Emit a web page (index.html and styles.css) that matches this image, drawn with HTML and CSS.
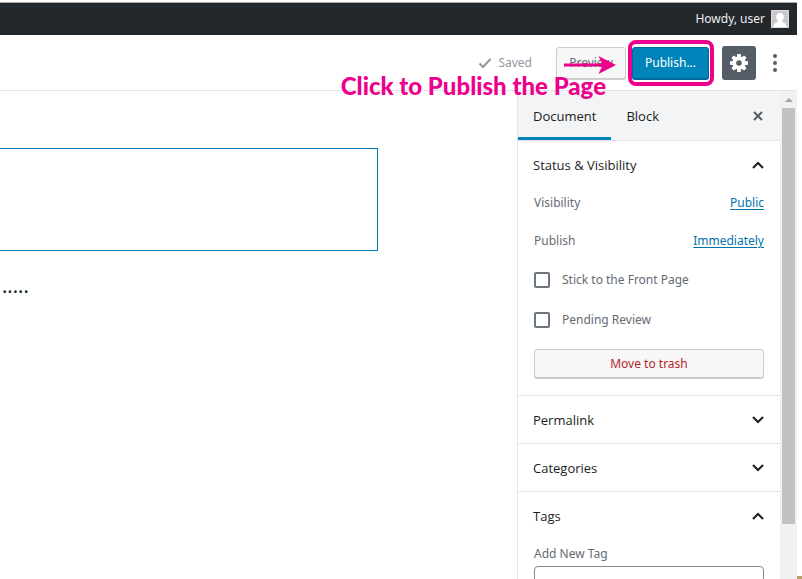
FILE: index.html
```html
<!DOCTYPE html>
<html lang="en">
<head>
<meta charset="utf-8">
<title>Edit Page</title>
<link rel="stylesheet" href="styles.css">
</head>
<body>
<div class="window">
  <div class="admin-bar">
    <span>Howdy, user</span>
    <svg class="avatar" viewBox="0 0 18 18" aria-hidden="true"><path fill="#c9c9c9" d="M0 0h18v18H0z"/><path fill="#fff" d="M9 3c2.300 0 3.800 1.600 3.800 4 0 1.900-.8 3.400-2 4.100.3 1.600 4.200 1.400 4.700 5.400V17h-13v-.5c.5-4 4.400-3.800 4.700-5.400-1.200-.7-2-2.200-2-4.100C5.200 4.600 6.700 3 9 3z"/><path fill="none" stroke="#ddd" d="M.5.500h17v17H.5z"/></svg>
  </div>
  <header class="toolbar">
    <span class="saved">
      <svg width="14" height="12" viewBox="0 0 14 12" aria-hidden="true"><path d="M1.500 6.500l3.500 3.500 7.500-8" fill="none" stroke="#8f98a1" stroke-width="2"/></svg>
      Saved
    </span>
    <div class="publish-group">
      <button class="button preview" type="button">Preview</button>
      <svg class="arrow" width="52" height="20" viewBox="0 0 52 20" aria-hidden="true"><path fill="#ec008c" d="M0 8.500h38L34.500 1 52 10 34.500 19l3.500-7.500H0z"/></svg>
      <button class="button publish" type="button">Publish...</button>
      <strong class="callout">Click to Publish the Page</strong>
    </div>
    <button class="settings" type="button" aria-label="Settings">
      <svg width="18" height="18" viewBox="0 0 18 18" aria-hidden="true"><g fill="#fff"><circle cx="9" cy="9" r="6.500"/><path id="teeth" d="M7.300 0h3.400l.6 4H6.700zM7.300 18h3.400l.6-4H6.700z"/><use href="#teeth" transform="rotate(45 9 9)"/><use href="#teeth" transform="rotate(90 9 9)"/><use href="#teeth" transform="rotate(135 9 9)"/></g><circle cx="9" cy="9" r="2.800" fill="#555d66"/></svg>
    </button>
    <button class="more" type="button" aria-label="More tools">
      <svg width="6" height="20" viewBox="0 0 6 20" fill="#555d66" aria-hidden="true"><circle cx="3" cy="3" r="2"/><circle cx="3" cy="10" r="2"/><circle cx="3" cy="17" r="2"/></svg>
    </button>
  </header>
  <div class="workspace">
    <main class="editor">
      <div class="block"></div>
      <p class="dots">.....</p>
    </main>
    <aside class="sidebar">
      <nav class="tabs">
        <button class="tab active" type="button">Document</button>
        <button class="tab" type="button">Block</button>
        <button class="close" type="button" aria-label="Close settings">
          <svg width="10" height="10" viewBox="0 0 10 10" aria-hidden="true"><path d="M1 1l8 8M9 1L1 9" stroke="#555d66" stroke-width="2"/></svg>
        </button>
      </nav>
      <section class="panel">
        <button class="heading" type="button">Status &amp; Visibility
          <svg width="12" height="8" viewBox="0 0 12 8" aria-hidden="true"><path d="M1 7l5-5 5 5"/></svg>
        </button>
        <div class="body">
          <div class="row"><span>Visibility</span><a href="#">Public</a></div>
          <div class="row"><span>Publish</span><a href="#">Immediately</a></div>
          <label class="check"><input type="checkbox">Stick to the Front Page</label>
          <label class="check"><input type="checkbox">Pending Review</label>
          <button class="button trash" type="button">Move to trash</button>
        </div>
      </section>
      <section class="panel">
        <button class="heading" type="button">Permalink
          <svg width="12" height="8" viewBox="0 0 12 8" aria-hidden="true"><path d="M1 1l5 5 5-5"/></svg>
        </button>
      </section>
      <section class="panel">
        <button class="heading" type="button">Categories
          <svg width="12" height="8" viewBox="0 0 12 8" aria-hidden="true"><path d="M1 1l5 5 5-5"/></svg>
        </button>
      </section>
      <section class="panel">
        <button class="heading" type="button">Tags
          <svg width="12" height="8" viewBox="0 0 12 8" aria-hidden="true"><path d="M1 7l5-5 5 5"/></svg>
        </button>
        <div class="body">
          <label class="tag-label" for="tag">Add New Tag</label>
          <input class="tag-input" id="tag" type="text">
        </div>
      </section>
    </aside>
    <div class="scrollbar">
      <svg width="8" height="4" viewBox="0 0 8 4" aria-hidden="true"><path d="M0 4l4-4 4 4z" fill="#a3a3a3"/></svg>
      <div class="thumb"></div>
    </div>
  </div>
</div>
<div class="edge"></div>
</body>
</html>
```
FILE: styles.css
```css
* { box-sizing: border-box; }
body {
  margin: 0;
  height: 100vh;
  overflow: hidden;
  display: flex;
  background: #fff;
  color: #646b73;
  font: 12px/18px "Noto Sans", sans-serif;
}
button { padding: 0; border: 0; background: none; color: inherit; font: inherit; }
svg { display: block; flex: none; }
.window { flex: 1; min-width: 0; display: flex; flex-direction: column; padding-top: 2px; }
.edge { width: 5px; align-self: flex-end; height: 3px; background: #b9a16b; }
.admin-bar {
  height: 33px;
  flex: none;
  display: flex;
  align-items: center;
  justify-content: flex-end;
  gap: 6px;
  padding-right: 8px;
  border-top: 1px solid #aaa;
  background: #23282d;
  color: #eee;
}
.avatar { width: 18px; height: 18px; }
.toolbar {
  height: 56px;
  flex: none;
  display: flex;
  align-items: center;
  justify-content: flex-end;
  padding-right: 19px;
  border-bottom: 1px solid #e2e4e7;
}
.saved { display: flex; align-items: center; gap: 6px; margin-right: 24px; color: #8f98a1; }
.publish-group { position: relative; display: flex; gap: 6px; margin-right: 13px; }
.button { border: 1px solid #ccc; border-radius: 3px; background: #f7f7f7; box-shadow: 0 1px 0 #ccc; }
.preview { width: 70px; height: 32px; }
.publish {
  position: relative;
  width: 77px;
  height: 32px;
  border-color: #006799;
  background: #0085ba;
  box-shadow: 0 1px 0 #006799;
  color: #fff;
}
.publish::after {
  content: "";
  position: absolute;
  inset: -8px -6px -8px -5px;
  border: 4px solid #ec008c;
  border-radius: 8px;
}
.arrow { position: absolute; left: 8px; top: 8px; }
.callout {
  position: absolute;
  right: 103px;
  top: 24px;
  color: #ec008c;
  font: 900 24px/30px Lato, sans-serif;
  white-space: nowrap;
}
.settings { width: 34px; height: 34px; border-radius: 3px; background: #555d66; display: grid; place-items: center; }
.more { margin-left: 16px; }
.workspace { flex: 1; min-height: 0; display: flex; }
.editor { flex: 1; padding-top: 57px; }
.block { height: 103px; margin-right: 139px; border: 1px solid #007cba; border-left: 0; }
.dots { margin: 21px 0 0 2px; color: #191e23; font-size: 20px; line-height: 28px; }
.sidebar { width: 263px; flex: none; overflow: hidden; border-left: 1px solid #e2e4e7; }
.tabs { height: 50px; display: flex; border-bottom: 1px solid #e2e4e7; background: #f3f4f5; }
.tab, .heading { color: #191e23; font: 500 13px/18px "Open Sans", sans-serif; }
.tab { padding: 3px 15px 0; border-bottom: 3px solid transparent; font-weight: 400; }
.tab.active { border-color: #0085ba; font-weight: 500; }
.close { margin-left: auto; padding: 0 17px; }
.panel { border-bottom: 1px solid #e2e4e7; }
.heading {
  width: 100%;
  height: 47px;
  display: flex;
  align-items: center;
  justify-content: space-between;
  padding: 0 16px 0 15px;
}
.heading path { fill: none; stroke: #191e23; stroke-width: 2; }
.body { padding: 6px 16px 17px; }
.row { display: flex; justify-content: space-between; margin-bottom: 20px; }
.row a { color: #0073aa; text-underline-offset: 2px; }
.row + .check { margin-top: -10px; }
.check { display: flex; align-items: center; gap: 12px; height: 40px; }
.check input { appearance: none; width: 16px; height: 16px; margin: 0; border: 2px solid #6c7781; border-radius: 2px; }
.trash { width: 100%; height: 29px; margin-top: 9px; color: #b52727; display: block; }
.tag-label { display: block; margin-bottom: 3px; }
.tag-input { width: 100%; height: 32px; border: 1px solid #7e8993; border-radius: 4px; }
.scrollbar { width: 17px; flex: none; padding: 7px 2px 0; background: #f1f1f1; }
.scrollbar svg { margin: 0 auto 6px; }
.thumb { height: 86.5%; background: #c1c1c1; }
```
